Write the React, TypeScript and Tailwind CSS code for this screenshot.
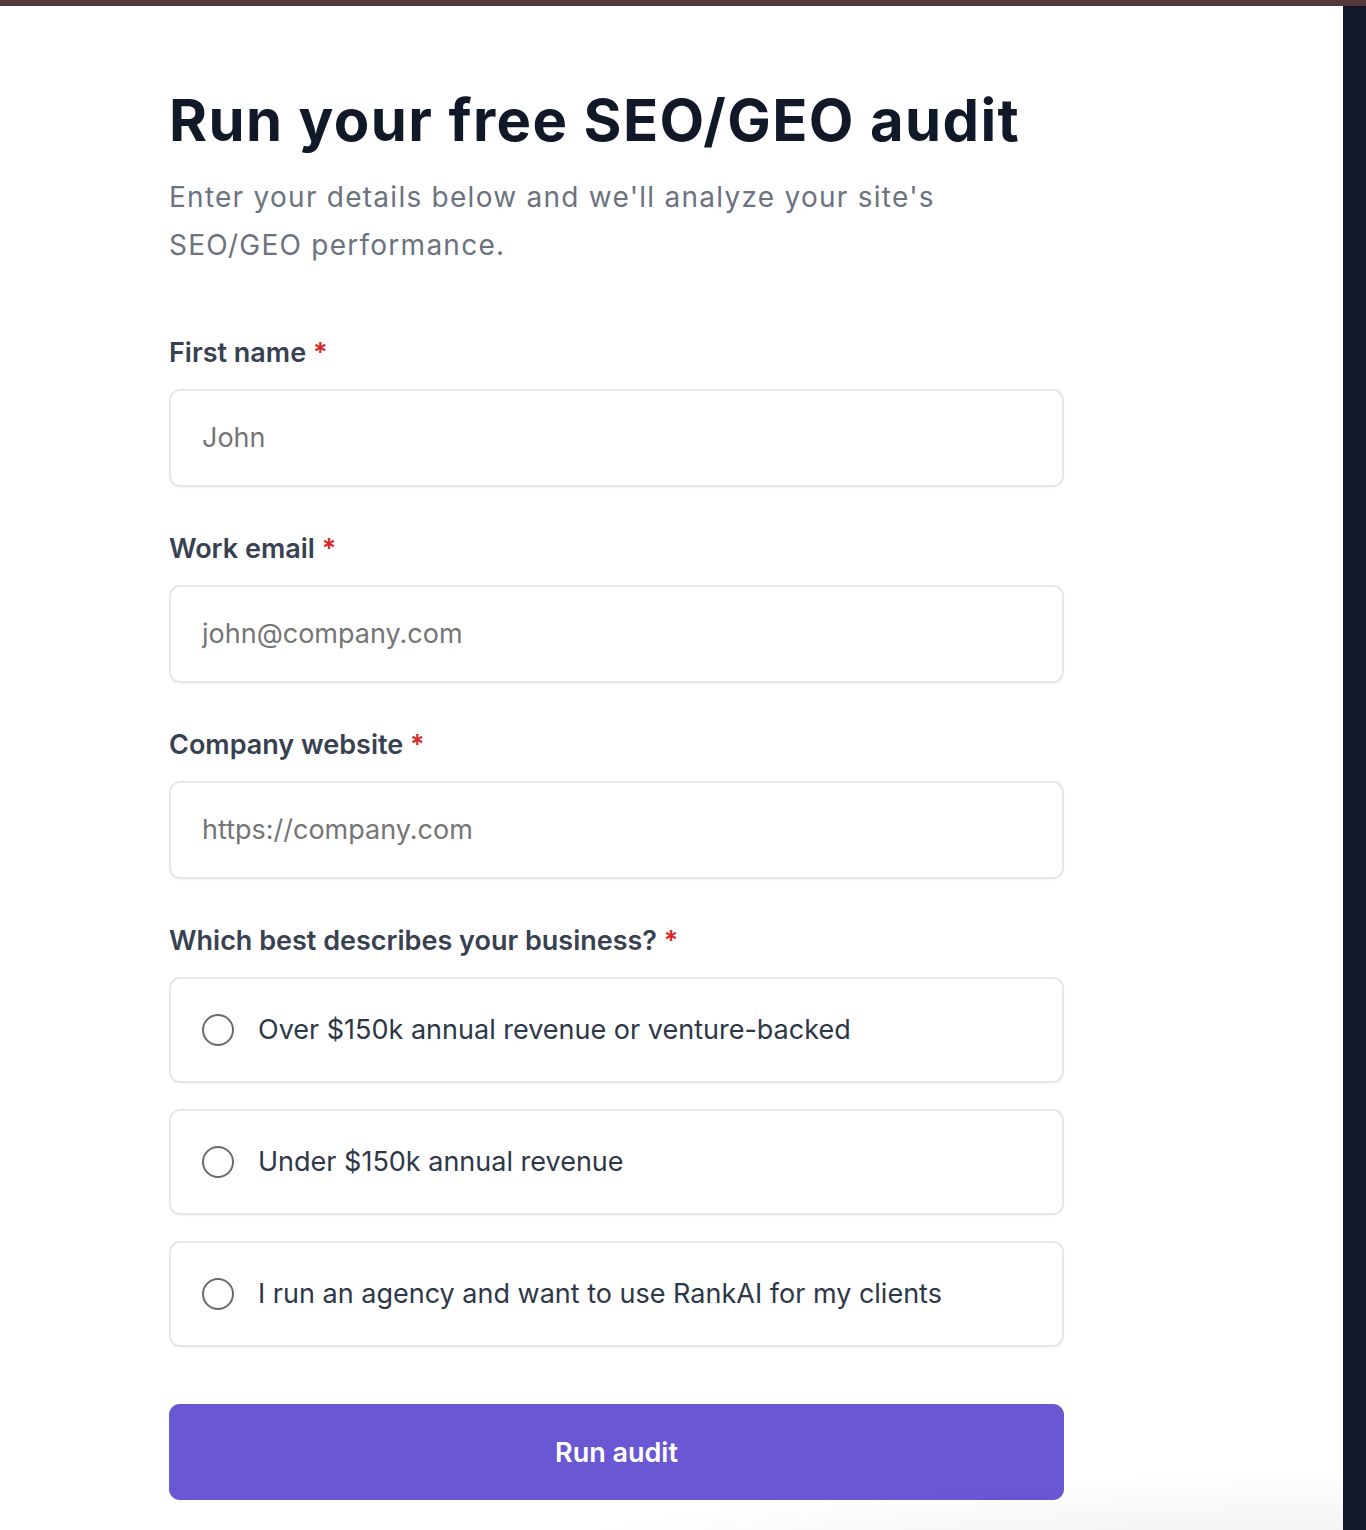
import { useState } from 'react';

const options = [
  'Over $150k annual revenue or venture-backed',
  'Under $150k annual revenue',
  'I run an agency and want to use RankAI for my clients',
];

function Label({ children }: { children: React.ReactNode }) {
  return (
    <label className="mb-[16px] block text-[27px] font-semibold leading-[40px] text-[#374151]">
      {children} <span className="text-[#dc2626]">*</span>
    </label>
  );
}

function TextField({ label, placeholder, type = 'text' }: { label: string; placeholder: string; type?: string }) {
  return (
    <div className="mb-[42px]">
      <Label>{label}</Label>
      <input
        type={type}
        placeholder={placeholder}
        className="block h-[98px] w-full rounded-[11px] border-2 border-[#e5e7eb] bg-white px-[31px] text-[27px] text-[#111827] shadow-[0_1px_2px_rgba(0,0,0,0.05)] outline-none placeholder:text-[#757575]"
      />
    </div>
  );
}

export default function App() {
  const [business, setBusiness] = useState<number | null>(null);

  return (
    <div className="relative flex h-[1530px] w-full flex-col overflow-hidden bg-white font-['Inter',sans-serif]">
      <div className="h-[6px] w-full bg-[#55393a]" />
      <div className="flex flex-1">
        <main className="flex-1 pl-[169px] pt-[83px]">
          <div className="w-[895px]">
            <h1 className="text-[58px] font-bold leading-[1.1] tracking-[0.024em] text-[#111827]">
              Run your free SEO/GEO audit
            </h1>
            <p className="mt-[20px] max-w-[800px] text-[28px] leading-[48px] tracking-[0.045em] text-[#6b7280]">
              Enter your details below and we'll analyze your site's SEO/GEO performance.
            </p>

            <form className="mt-[64px]" onSubmit={(e) => e.preventDefault()}>
              <TextField label="First name" placeholder="John" />
              <TextField label="Work email" placeholder="john@company.com" type="email" />
              <TextField label="Company website" placeholder="https://company.com" />

              <div>
                <Label>Which best describes your business?</Label>
                <div className="flex flex-col gap-[26px]">
                  {options.map((opt, i) => (
                    <button
                      key={opt}
                      type="button"
                      onClick={() => setBusiness(i)}
                      className="flex h-[106px] w-full items-center gap-[24px] rounded-[11px] border-2 border-[#e5e7eb] bg-white px-[31px] pt-[1px] text-left shadow-[0_1px_2px_rgba(0,0,0,0.04)]"
                    >
                      <span className="flex h-[32px] w-[32px] shrink-0 items-center justify-center rounded-full border-2 border-[#6b6b6b]">
                        {business === i && <span className="h-[16px] w-[16px] rounded-full bg-[#6957d4]" />}
                      </span>
                      <span className="text-[27px] text-[#2d3748]">{opt}</span>
                    </button>
                  ))}
                </div>
              </div>

              <button
                type="submit"
                className="mt-[57px] flex h-[96px] w-full items-center justify-center rounded-[11px] bg-[#6957d4] pt-[3px] text-[27px] font-semibold text-white"
              >
                Run audit
              </button>
            </form>
          </div>
        </main>
        <aside className="w-[23px] bg-[#111827]" />
      </div>
      {/* faint shadow bleeding in from below */}
      <div className="pointer-events-none absolute bottom-[-60px] right-[23px] h-[120px] w-[900px] bg-[radial-gradient(ellipse_at_bottom_right,rgba(0,0,0,0.09),rgba(0,0,0,0)_70%)]" />
    </div>
  );
}
